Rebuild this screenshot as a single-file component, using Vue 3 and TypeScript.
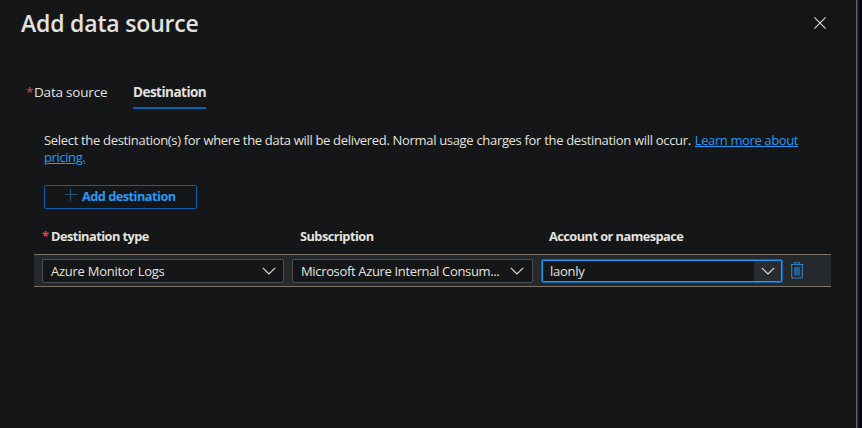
<script setup lang="ts">
import { ref } from 'vue'

interface Field {
  label: string
  value: string
  required: boolean
  focused: boolean
}

const fields = ref<Field[]>([
  { label: 'Destination type', value: 'Azure Monitor Logs', required: true, focused: false },
  { label: 'Subscription', value: 'Microsoft Azure Internal Consum...', required: false, focused: false },
  { label: 'Account or namespace', value: 'laonly', required: false, focused: true },
])
</script>

<template>
  <div class="page">
    <main class="blade">
      <header class="head">
        <h1>Add data source</h1>
        <button class="close" aria-label="Close">
          <svg width="12" height="12" viewBox="0 0 12 12"><path d="M.4.4l11.200 11.200M11.600.4L.4 11.600" fill="none" stroke="#dcdcda" stroke-width="1.1" /></svg>
        </button>
      </header>
      <nav class="tabs">
        <a class="tab"><span class="star">*</span><span class="tab-one">Data source</span></a>
        <a class="tab active"><span>Destination</span></a>
      </nav>
      <div class="intro">
        <div class="line">
          <span>Select the destination(s) for where the data will be delivered. Normal usage charges for the destination will occur.</span>
          <a class="link">Learn more about</a>
        </div>
        <div class="line"><a class="link">pricing.</a></div>
      </div>
      <button class="add">
        <svg width="12" height="12" viewBox="0 0 12 12"><path d="M0 5.500h12M5.500 0v12" stroke="#24567d" stroke-width="1.200" /></svg>
        <span>Add destination</span>
      </button>
      <div class="labels">
        <div v-for="f in fields" :key="f.label" class="label">
          <span v-if="f.required" class="star">*</span><span>{{ f.label }}</span>
        </div>
      </div>
      <div class="row">
        <div v-for="f in fields" :key="f.label" class="select" :class="{ focused: f.focused }">
          <span class="value">{{ f.value }}</span>
          <span class="arrow">
            <svg width="14" height="8" viewBox="0 0 14 8"><path d="M.8.8L7 7 13.2.8" fill="none" stroke="#e0dfdd" stroke-width="1.15" /></svg>
          </span>
        </div>
        <button class="trash" aria-label="Delete">
          <svg width="14" height="17" viewBox="0 0 14 17">
            <path d="M4 5h6v8.500H4z" fill="#235f94" />
            <path d="M.5 2.500h13M4.500 2.500V.7h5v1.800M1.700 3v12q0 1 1 1h8.600q1 0 1-1V3" fill="none" stroke="#2a7fc9" stroke-width="1.15" />
          </svg>
        </button>
      </div>
    </main>
  </div>
</template>

<style>
body {
  margin: 0;
  background: #030914;
}
</style>

<style scoped>
* {
  box-sizing: border-box;
}
.page {
  width: 862px;
  height: 428px;
  overflow: hidden;
  font: 13px/17px "Segoe UI", "Open Sans", "Noto Sans", sans-serif;
  color: #e4e2df;
  background: linear-gradient(90deg, #2a2a2d 858px, #030914 859px);
}
.blade {
  width: 857px;
  height: 428px;
  background: #141618;
  border-right: 1px solid #69625d;
}
button {
  background: none;
  border: 0;
  padding: 0;
  font: inherit;
  color: inherit;
}
svg {
  display: block;
}
.head {
  display: flex;
  justify-content: space-between;
  align-items: center;
  height: 46px;
  padding: 0 30px 0 21px;
}
h1 {
  margin: 0;
  font-size: 23px;
  line-height: 30px;
  font-weight: 650;
  letter-spacing: -0.18px;
}
.tabs {
  display: flex;
  gap: 26px;
  height: 63px;
  padding: 37px 0 0 26px;
}
.tab {
  display: flex;
  height: 26px;
  font-size: 13.500px;
  line-height: 19px;
  letter-spacing: -0.2px;
  white-space: nowrap;
}
.tab .star {
  width: 8px;
}
.tab-one {
  width: 73px;
}
.tab.active {
  width: 73px;
  font-weight: 700;
  letter-spacing: -0.52px;
  border-bottom: 2px solid #0663ae;
}
.star {
  color: #e0474c;
}
.intro {
  margin: 23px 0 0 44px;
  letter-spacing: -0.317px;
  white-space: nowrap;
}
.line {
  display: flex;
  gap: 4px;
}
.link {
  color: #2899f5;
  text-decoration: underline;
  letter-spacing: -0.39px;
}
.add {
  display: flex;
  align-items: center;
  gap: 5px;
  width: 153px;
  height: 24px;
  margin: 19px 0 0 44px;
  padding: 0 0 2px 20px;
  border: 1px solid #0a62ab;
  border-radius: 2px;
  color: #2899f5;
  font-size: 12.800px;
  font-weight: 700;
  letter-spacing: -0.54px;
}
.add svg {
  margin-bottom: 2px;
}
.labels {
  display: grid;
  grid-template-columns: 258px 249px 1fr;
  margin-top: 19px;
  padding-left: 42px;
  font-size: 12.800px;
  font-weight: 700;
  letter-spacing: -0.55px;
}
.label {
  display: flex;
}
.label .star {
  width: 9px;
}
.row {
  display: flex;
  align-items: center;
  gap: 8px;
  width: 797px;
  height: 33px;
  margin: 9px 0 0 34px;
  padding-left: 8px;
  background: #25292b;
  border: solid #7b7166;
  border-width: 1px 0;
}
.select {
  display: flex;
  justify-content: space-between;
  width: 242px;
  height: 24px;
  border: 1px solid #4c5054;
  border-radius: 2px;
  background: #141618;
  line-height: 22px;
  letter-spacing: -0.25px;
  white-space: nowrap;
}
.select:nth-child(2) {
  width: 241px;
  letter-spacing: -0.345px;
}
.value {
  padding-left: 8px;
}
.arrow {
  display: flex;
  align-items: center;
  justify-content: center;
  width: 29px;
}
.select.focused {
  width: 242px;
  border-color: #0a62ab;
  box-shadow: inset 0 0 0 1px #2899f5;
  padding: 1px;
  line-height: 20px;
}
.focused .value {
  padding-left: 7px;
}
.focused .arrow {
  width: 27px;
  background: #292c2e;
}
.select:nth-child(2) .arrow {
  width: 30px;
}
.trash {
  margin-left: -1px;
}
</style>
